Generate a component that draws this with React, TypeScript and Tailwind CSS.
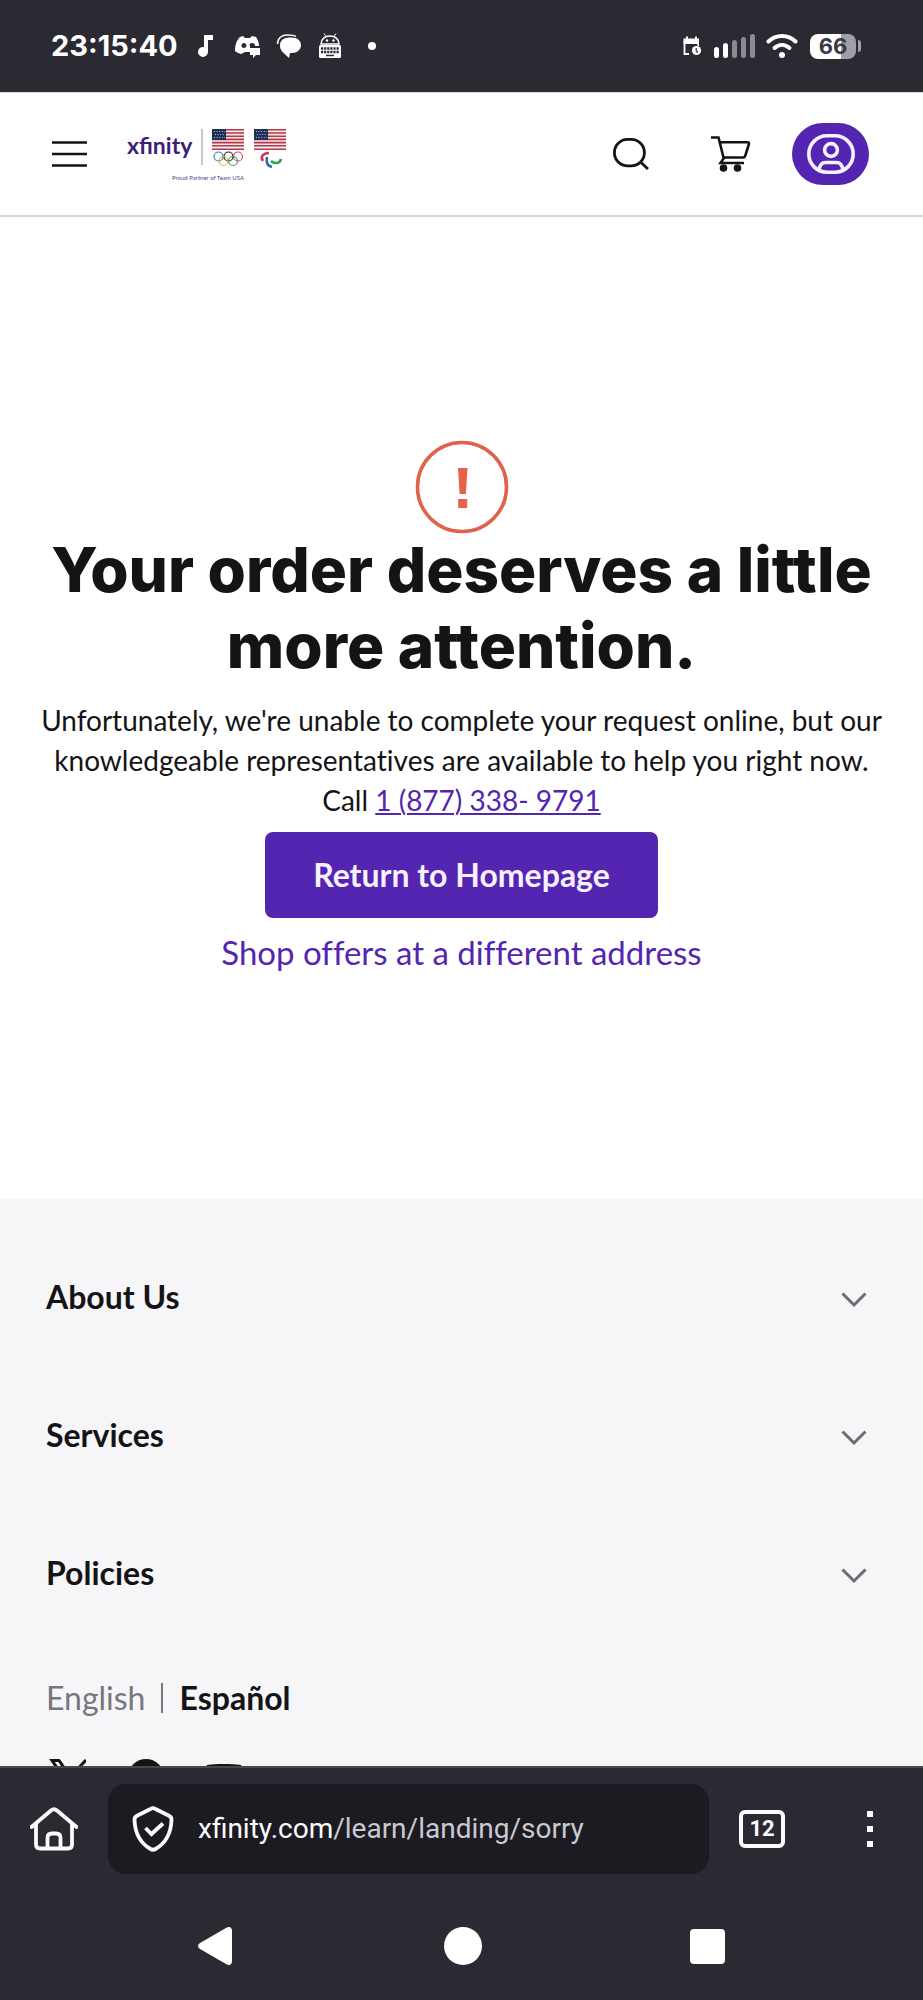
import { useState } from 'react'

const footerSections = ['About Us', 'Services', 'Policies']

function StatusBar() {
  return (
    <div className="flex h-[92px] shrink-0 items-center justify-between bg-[#2b2a33] pr-[62px] pl-[51px] text-white">
      <div className="flex items-center">
        <span className="w-[147px] font-['Inter',sans-serif] text-[29px] leading-9 font-bold">23:15:40</span>
        <svg width="16" height="24" viewBox="0 0 16 24" fill="currentColor" aria-hidden="true">
          <path d="M6 1h9v5h-5v12a5 5 0 1 1-4-5z" />
        </svg>
        <svg className="ml-5" width="28" height="24" viewBox="0 0 28 24" fill="currentColor" aria-hidden="true">
          <path
            fillRule="evenodd"
            d="M6 3l3-1 2 2h5l2-2 4 1c2 3 3 6 3 9h-9v6h-5l-2 1-2 1c-3-1-5-2-6-3 0-5 1-10 5-14zM10 9a2.500 2.500 0 1 0 0 5 2.500 2.500 0 0 0 0-5zM18 9a2 2 0 0 0-2 3h5a3 3 0 0 0-3-3z"
          />
          <path d="M16 14h10v7h-4l-3 3v-3h-3z" />
        </svg>
        <svg className="ml-3.5" width="26" height="26" viewBox="0 0 26 26" fill="currentColor" aria-hidden="true">
          <path d="M13 4.500h3c5 0 9 3 9 7.500s-4 8-9 8h-2l-1 5-7-6.500A8 8 0 0 1 4 12c0-4.500 4-7.500 9-7.500z" />
          <path d="M1.500 11C1.500 5 6 2 11 2c4 0 7 0 9 1.500" fill="none" stroke="currentColor" strokeWidth="1.500" />
        </svg>
        <svg className="ml-4" width="24" height="26" viewBox="0 0 24 26" aria-hidden="true">
          <path d="M3 11C3 6 7 3 12 3s9 3 9 8z" fill="none" stroke="#fff" strokeWidth="1.500" />
          <path d="M6 0.500l2 3M18 0.500l-2 3" stroke="#fff" strokeWidth="1" />
          <circle cx="9" cy="7.500" r="1.200" fill="#fff" />
          <circle cx="15.500" cy="7.500" r="1.200" fill="#fff" />
          <rect x="1" y="12" width="22" height="13" rx="1.500" fill="#fff" />
          <path d="M3 15.500h18M3 19h18" stroke="#2b2a33" strokeWidth="2.400" strokeDasharray="2.200 0.900" />
          <path d="M8 22.500h8" stroke="#2b2a33" strokeWidth="1.500" />
        </svg>
        <span className="ml-[26px] size-2 rounded-full bg-white" />
      </div>

      <div className="flex items-center">
        <svg width="20" height="20" viewBox="0 0 20 20" aria-hidden="true">
          <path d="M7 18H2.500V5" fill="none" stroke="#fff" strokeWidth="1.800" />
          <path d="M1.500 2.500h15.500V8H1.500zM4 0.500h2v3H4zM13 0.500h2v3h-2z" fill="#fff" />
          <path d="M16.200 6v4" stroke="#fff" strokeWidth="1.600" />
          <circle cx="14.500" cy="14.500" r="4.600" fill="#fff" />
          <path d="M14.200 12v3l1.800 1.500" fill="none" stroke="#2b2a33" strokeWidth="1.200" />
        </svg>
        <svg className="ml-3" width="42" height="26" viewBox="0 0 42 26" aria-hidden="true">
          <rect x="0" y="14" width="5" height="11" rx="2.500" fill="#fff" />
          <rect x="9" y="10" width="5" height="15" rx="2.500" fill="#fff" />
          <rect x="18" y="7" width="5" height="18" rx="2.500" fill="#8b8a90" />
          <rect x="27" y="4" width="5" height="21" rx="2.500" fill="#8b8a90" />
          <rect x="36" y="1" width="5" height="24" rx="2.500" fill="#8b8a90" />
        </svg>
        <svg className="ml-2.5" width="32" height="26" viewBox="0 0 32 26" aria-hidden="true">
          <path d="M2.500 8.500C10 1 22 1 29.500 8.500" fill="none" stroke="#fff" strokeWidth="4" strokeLinecap="round" />
          <path d="M8.500 15c4.500-4 10.500-4 15 0" fill="none" stroke="#fff" strokeWidth="4" strokeLinecap="round" />
          <circle cx="16" cy="22" r="3" fill="#fff" />
        </svg>
        <span className="ml-3 flex h-[25px] w-[46px] items-center justify-center rounded-lg bg-linear-to-r from-white from-67% to-[#a09fa5] to-67% font-['Inter',sans-serif] text-[22px] font-bold text-[#3b3a40]">
          66
        </span>
        <span className="ml-0.5 h-3 w-[3px] rounded-r bg-[#a09fa5]" />
      </div>
    </div>
  )
}

function Flag({ x }: { x: number }) {
  return (
    <g transform={`translate(${x} 0)`}>
      <rect width="32" height="21" fill="#f6e9ea" />
      <path
        d="M0 0.800h32M0 4h32M0 7.200h32M0 10.400h32M0 13.600h32M0 16.800h32M0 20.200h32"
        stroke="#b23a48"
        strokeWidth="1.600"
      />
      <rect width="14" height="11" fill="#1f2f57" />
      <path d="M2 2.500h11M3 5.500h10M2 8.500h11" stroke="#c9d2e4" strokeWidth="0.900" strokeDasharray="1 1.600" />
    </g>
  )
}

function Logo() {
  return (
    <a href="#" aria-label="Xfinity home" className="pt-1">
      <svg width="162" height="54" viewBox="0 0 162 54">
        <text x="0" y="25" fontFamily="Lato, sans-serif" fontWeight="700" fontSize="23" fill="#3b1f78">
          xfinity
        </text>
        <path d="M75 0v36" stroke="#a5a5a8" strokeWidth="1.200" />
        <Flag x={85} />
        <Flag x={127} />
        <g fill="none" strokeWidth="1.200">
          <circle cx="91.500" cy="27.500" r="4.500" stroke="#2f7fc1" />
          <circle cx="101.500" cy="27.500" r="4.500" stroke="#222" />
          <circle cx="111" cy="27.500" r="4.500" stroke="#d9455a" />
          <circle cx="96.500" cy="32" r="4.500" stroke="#eeb04a" />
          <circle cx="106" cy="32" r="4.500" stroke="#3f9d62" />
        </g>
        <path d="M142 24c-6 0-9 4-6 8" fill="none" stroke="#d0384e" strokeWidth="2.600" />
        <path d="M140 28c-1 5 0 9 5 10" fill="none" stroke="#2a6eb5" strokeWidth="2.600" />
        <path d="M144 32c3 3 9 3 10-2" fill="none" stroke="#35a055" strokeWidth="2.600" />
        <text x="45" y="51" fontFamily="Lato, sans-serif" fontSize="6" fill="#5a3d92">
          Proud Partner of Team USA
        </text>
      </svg>
    </a>
  )
}

function SiteHeader() {
  return (
    <header className="flex h-[125px] shrink-0 items-center justify-between border-t border-b-2 border-t-[#d8d8dc] border-b-[#d5d4da] bg-white pr-[54px] pl-[52px] text-[#141417]">
      <div className="flex items-center gap-10">
        <button aria-label="Menu">
          <svg width="35" height="28" viewBox="0 0 35 28" stroke="currentColor" strokeWidth="2.600">
            <path d="M0 2.500h35M0 14h35M0 25.500h35" />
          </svg>
        </button>
        <Logo />
      </div>
      <div className="flex items-center">
        <button aria-label="Search">
          <svg width="36" height="32" viewBox="0 0 36 32" fill="none" stroke="currentColor" strokeWidth="2.800">
            <rect x="1.400" y="1.400" width="30" height="26.500" rx="13.250" />
            <path d="M27 23.500l8 7.500" />
          </svg>
        </button>
        <button aria-label="Cart" className="ml-[62px]">
          <svg width="40" height="36" viewBox="0 0 40 36" fill="none" stroke="currentColor" strokeWidth="2.600">
            <path d="M0 1.500h7.500l5 20h19.500c1.500 0 2-.5 2.300-2l3.500-11c.5-1.500 0-2.300-1.500-2.300H9M13 22l-3.500 5h23.500" />
            <circle cx="12.500" cy="32" r="3.800" fill="currentColor" stroke="none" />
            <circle cx="26.500" cy="32" r="3.800" fill="currentColor" stroke="none" />
          </svg>
        </button>
        <button
          aria-label="Account"
          className="ml-[41px] flex h-[62px] w-[77px] items-center justify-center rounded-full bg-[#5325b0] text-[#f6f0ff]"
        >
          <svg width="48" height="40" viewBox="0 0 48 40" fill="none" stroke="currentColor" strokeWidth="3.600">
            <rect x="1.800" y="1.800" width="44.400" height="36.400" rx="18.200" />
            <circle cx="24" cy="16" r="6.400" />
            <path d="M12 36c.8-5 3-7.500 6.500-7.500h11c3.500 0 5.700 2.500 6.500 7.500" />
          </svg>
        </button>
      </div>
    </header>
  )
}

function SorryMessage() {
  return (
    <main className="flex h-[982px] shrink-0 flex-col items-center bg-white px-8 pt-[223px] text-center font-['Lato',sans-serif] [font-variant-ligatures:none]">
      <svg width="94" height="94" viewBox="0 0 94 94" aria-hidden="true">
        <circle cx="47" cy="47" r="44.500" fill="none" stroke="#e0614c" strokeWidth="3.600" />
        <path d="M43 28h9.500l-1.600 26h-6.300zM43.200 59h9v9h-9z" fill="#e8604a" />
      </svg>
      <h1 className="-mt-0.5 font-['Inter',sans-serif] text-[62px] leading-[76px] font-extrabold text-[#141417]">
        Your order deserves a little
        <br />
        more attention.
      </h1>
      <p className="mt-4 text-[28px] leading-10 text-[#141417]">
        Unfortunately, we're unable to complete your request online, but our
        <br />
        knowledgeable representatives are available to help you right now.
        <br />
        Call{' '}
        <a href="tel:18773389791" className="text-[#5325b0] underline decoration-2 underline-offset-2">
          1 (877) 338- 9791
        </a>
      </p>
      <button className="mt-3 rounded-lg bg-[#5325b0] px-12 py-6 text-[32px] leading-[38px] font-bold text-[#f6f0ff]">
        Return to Homepage
      </button>
      <a href="#" className="mt-4 text-[33px] leading-9 text-[#5325b0]">
        Shop offers at a different address
      </a>
    </main>
  )
}

function SiteFooter() {
  const [open, setOpen] = useState<string | null>(null)

  return (
    <footer className="shrink-0 bg-[#f6f6f9] px-[46px] pt-[29px] font-['Lato',sans-serif] text-[#141417]">
      {footerSections.map((title) => (
        <button
          key={title}
          aria-expanded={open === title}
          onClick={() => setOpen(open === title ? null : title)}
          className="flex w-full items-center justify-between py-[51px] pr-2.5 text-left text-[32px] leading-9 font-bold"
        >
          {title}
          <svg className="mt-1.5" width="26" height="16" viewBox="0 0 26 16" fill="none" stroke="#6b6b70" strokeWidth="3">
            <path d="M1.500 1.500L13 13L24.500 1.500" />
          </svg>
        </button>
      ))}
      <div className="mt-[38px] flex items-center text-[32px] leading-9">
        <a href="#" className="text-[#77777c]">
          English
        </a>
        <span className="mr-4 ml-4 h-[30px] w-0.5 bg-[#77777c]" />
        <a href="#" className="font-bold">
          Español
        </a>
      </div>
      <div className="mt-[43px] flex gap-9">
        <a href="#" aria-label="X">
          <svg width="40" height="36" viewBox="0 0 40 36" fill="none" stroke="currentColor" strokeWidth="3">
            <path d="M6 1.500h7l23 33h-7zM40 1L8 35" />
          </svg>
        </a>
        <a href="#" aria-label="Facebook">
          <svg width="40" height="36" viewBox="0 0 40 36" fill="currentColor">
            <circle cx="24" cy="18" r="18" />
          </svg>
        </a>
        <a href="#" aria-label="YouTube">
          <svg width="46" height="36" viewBox="0 0 46 36" fill="currentColor">
            <path d="M9 6c5-1.500 28-1.500 34 0 2 3 2 19 0 22-6 2-29 2-34 0-2-3-2-19 0-22z" />
          </svg>
        </a>
      </div>
    </footer>
  )
}

function BrowserBar() {
  return (
    <div className="flex h-[134px] shrink-0 items-start border-t-2 border-[#48474e] bg-[#2b2a33] pt-4 pr-12 pl-[30px] font-['Roboto',sans-serif] text-[#fbfbfe]">
      <button aria-label="Home" className="flex h-[90px] items-center">
        <svg width="48" height="44" viewBox="0 0 48 44" fill="none" stroke="currentColor" strokeWidth="3.800">
          <path d="M1.500 20L21 3.500c2-1.700 4-1.700 6 0L46.500 20" strokeLinecap="round" />
          <path d="M6 17v20.500c0 2.500 1.200 4 4 4h28c2.800 0 4-1.500 4-4V17M17.500 41V31c0-3 1.500-4.500 4.500-4.500h4c3 0 4.500 1.500 4.500 4.500v10" />
        </svg>
      </button>
      <div className="ml-[30px] flex h-[90px] flex-1 items-center rounded-[18px] bg-[#1c1b22] pl-6">
        <svg width="42" height="46" viewBox="0 0 42 46" fill="none" stroke="currentColor" strokeWidth="3.800">
          <path d="M19 2.700c1.300-.7 2.700-.7 4 0l14 7c1.800.9 2.600 2.200 2.500 4.300C39 27 34 37 23.500 43c-1.700 1-3.300 1-5 0C8 37 3 27 2.500 14c-.1-2.100.7-3.400 2.500-4.300z" />
          <path d="M13.500 22l6 6L31 17.500" />
        </svg>
        <span className="ml-6 text-[28px] leading-9 whitespace-nowrap">
          xfinity.com<span className="text-[#c9c9d0]">/learn/landing/sorry</span>
        </span>
      </div>
      <div className="ml-[30px] flex h-[90px] items-center">
        <button
          aria-label="12 open tabs"
          className="flex h-[38px] w-[46px] items-center justify-center rounded-md border-4 border-[#fbfbfe] text-[22px] leading-6 font-bold"
        >
          12
        </button>
      </div>
      <div className="ml-20 flex h-[90px] items-center">
        <button aria-label="Browser menu" className="flex w-2.5 flex-col items-center gap-[9px]">
          <span className="size-1.5 bg-[#fbfbfe]" />
          <span className="size-1.5 bg-[#fbfbfe]" />
          <span className="size-1.5 bg-[#fbfbfe]" />
        </button>
      </div>
    </div>
  )
}

function SystemNav() {
  return (
    <nav className="flex shrink-0 items-center justify-between bg-[#2b2a33] pt-6 pr-[198px] pb-8 pl-[197px] text-white">
      <button aria-label="Back">
        <svg width="38" height="44" viewBox="0 0 38 44" fill="currentColor">
          <path d="M29 4c3-2 6-1 6 3v30c0 4-3 5-6 3L3 25c-2.500-1.500-2.500-4.500 0-6z" />
        </svg>
      </button>
      <button aria-label="Home screen" className="size-[38px] rounded-full bg-white" />
      <button aria-label="Recent apps" className="size-[35px] rounded bg-white" />
    </nav>
  )
}

export default function App() {
  return (
    <div className="flex h-screen flex-col overflow-hidden">
      <StatusBar />
      <div className="flex min-h-0 flex-1 flex-col overflow-hidden bg-[#f6f6f9]">
        <SiteHeader />
        <SorryMessage />
        <SiteFooter />
      </div>
      <BrowserBar />
      <SystemNav />
    </div>
  )
}
